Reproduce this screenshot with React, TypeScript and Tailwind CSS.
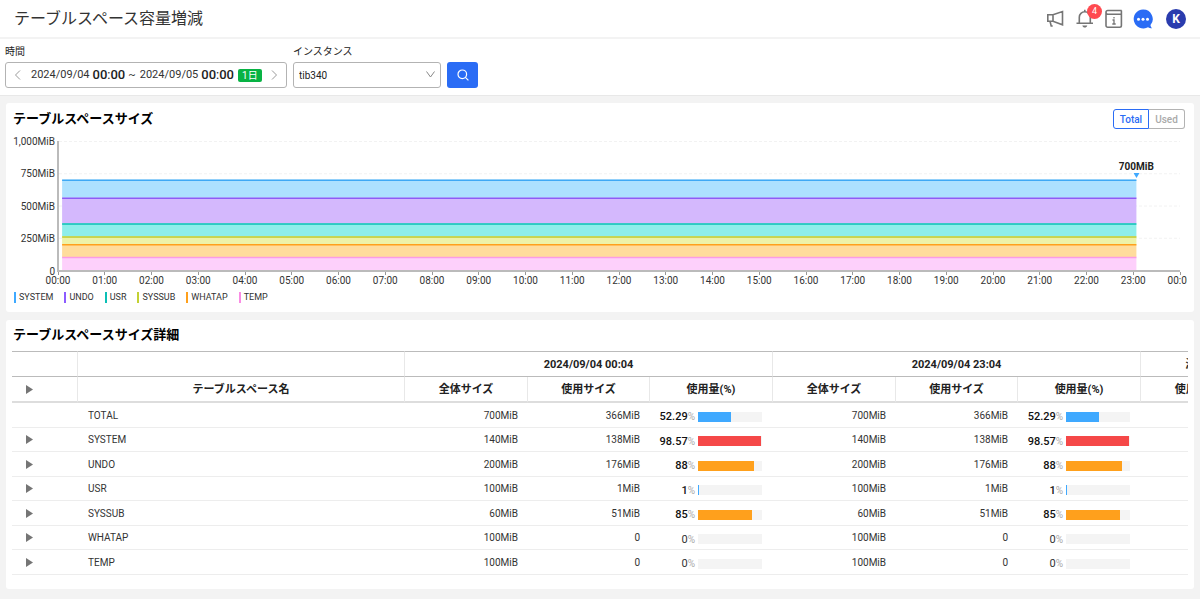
import React from "react";

type Row = { name: string; total: string; used: string; pct: string; color: string; expandable: boolean };

const rows: Row[] = [
  { name: "TOTAL", total: "700MiB", used: "366MiB", pct: "52.29", color: "bg-[#3fa9ff]", expandable: false },
  { name: "SYSTEM", total: "140MiB", used: "138MiB", pct: "98.57", color: "bg-[#f54848]", expandable: true },
  { name: "UNDO", total: "200MiB", used: "176MiB", pct: "88", color: "bg-[#ffa01c]", expandable: true },
  { name: "USR", total: "100MiB", used: "1MiB", pct: "1", color: "bg-[#3fa9ff]", expandable: true },
  { name: "SYSSUB", total: "60MiB", used: "51MiB", pct: "85", color: "bg-[#ffa01c]", expandable: true },
  { name: "WHATAP", total: "100MiB", used: "0", pct: "0", color: "bg-[#3fa9ff]", expandable: true },
  { name: "TEMP", total: "100MiB", used: "0", pct: "0", color: "bg-[#3fa9ff]", expandable: true },
];

const series = [
  { name: "SYSTEM", value: 140, line: "#3fa9f5", fill: "#ade1ff", swatch: "bg-[#3fa9ff]" },
  { name: "UNDO", value: 200, line: "#8c5cf5", fill: "#d4b8fd", swatch: "bg-[#8c5cff]" },
  { name: "USR", value: 100, line: "#0bbfb5", fill: "#8eeeea", swatch: "bg-[#0bbfb5]" },
  { name: "SYSSUB", value: 60, line: "#bccb30", fill: "#eef2a8", swatch: "bg-[#c3d133]" },
  { name: "WHATAP", value: 100, line: "#ffa01c", fill: "#ffdc9c", swatch: "bg-[#ffa01c]" },
  { name: "TEMP", value: 100, line: "#fa9be6", fill: "#fdd0fb", swatch: "bg-[#fa8ce4]" },
];

const times = Array.from({ length: 25 }, (_, i) => String(i % 24).padStart(2, "0") + ":00");

function Arrow() {
  return (
    <svg className="block h-[9px] w-[7px]" viewBox="0 0 7 9" fill="#757575" aria-hidden="true">
      <path d="M0 0 7 4.5 0 9Z" />
    </svg>
  );
}

function TopBar() {
  return (
    <header className="flex h-[39px] items-center justify-between border-b-2 border-[#f3f3f3] bg-white px-3.5">
      <h1 className="text-base text-[#333]">テーブルスペース容量増減</h1>
      <div className="flex items-center gap-[9px]">
        <button aria-label="お知らせ" className="h-5 w-5">
          <svg viewBox="0 0 20 20" className="h-5 w-5" fill="none" stroke="#757575" strokeWidth="1.6">
            <path d="M1.800 5.700h5.200L16.500 2.500v13.300L7 12.300H1.800ZM7 5.700v6.600M4 12.300l1.200 4.700h1.500" />
          </svg>
        </button>
        <button aria-label="通知" className="relative h-5 w-5">
          <svg viewBox="0 0 20 20" className="h-5 w-5" fill="none" stroke="#757575" strokeWidth="1.600">
            <path d="M1.500 14.300h16.500M4.300 14.300V8.300a5.500 5.500 0 0 1 11 0v6M9.800 2.800V.8" />
            <path d="M7.300 16.500h5c-.5 1.500-1.300 2-2.500 2s-2-.5-2.500-2Z" fill="#757575" stroke="none" />
          </svg>
          <span className="absolute -top-[5px] left-3 h-[15px] w-[15px] rounded-full bg-[#ff4a50] text-center text-[9px] leading-[15px] text-white">4</span>
        </button>
        <button aria-label="ガイド" className="h-5 w-5">
          <svg viewBox="0 0 20 20" className="h-5 w-5" fill="none" stroke="#757575" strokeWidth="1.600">
            <path d="M17.200 5.300H4a2 2 0 0 1-2-2A1.700 1.700 0 0 1 3.700 1.500h14M2 3.500v13a1.700 1.700 0 0 0 1.700 1.700h12a1.700 1.700 0 0 0 1.700-1.700V1.500" />
            <path d="M10 8v1.500M8.500 11H10v4M8.300 15h3.400" strokeWidth="1.300" />
          </svg>
        </button>
        <button aria-label="チャット" className="h-5 w-5">
          <svg viewBox="0 0 20 20" className="h-5 w-5">
            <path d="M10 .5a9.500 9.500 0 1 0 5 17.700c1.200.9 2.800 1.300 4 1-.9-.7-1.400-1.900-1.500-3.100A9.500 9.500 0 0 0 10 .5Z" fill="#2a6cf5" />
            <g fill="#fff"><circle cx="5.500" cy="10.200" r="1.500" /><circle cx="10" cy="10.200" r="1.500" /><circle cx="14.500" cy="10.200" r="1.500" /></g>
          </svg>
        </button>
        <button aria-label="アカウント" className="ml-1 h-5 w-5 rounded-full bg-[#2a3cae] text-xs leading-5 font-bold text-white">K</button>
      </div>
    </header>
  );
}

function Filters() {
  return (
    <form className="flex items-end gap-1.5 border-b border-[#e8e8e8] bg-white px-[5px] pt-1.5 pb-[7px]">
      <div>
        <div className="mb-[3px] text-[10px] leading-[14px] text-[#222]">時間</div>
        <div className="flex h-[26px] w-[282px] items-center rounded-[3px] border border-[#b3b3b3] px-2">
          <button type="button" aria-label="前へ" className="w-[17px]">
            <svg viewBox="0 0 8 10" className="h-2.5 w-2" fill="none" stroke="#999"><path d="M6 .5 1.500 5 6 9.500" /></svg>
          </button>
          <div className="flex flex-1 items-center text-[11px] whitespace-nowrap text-[#333]">
            <span>2024/09/04</span>
            <b className="ml-[3px] text-[13px] leading-4 font-medium text-[#222]">00<span className="font-normal">:</span>00</b>
            <span className="mr-1 ml-[3px]">~</span>
            <span>2024/09/05</span>
            <b className="ml-[3px] text-[13px] leading-4 font-medium text-[#222]">00<span className="font-normal">:</span>00</b>
            <span className="ml-1 h-[13px] rounded-[2px] bg-[#08b344] px-1 text-[10px] leading-[13px] text-white">1日</span>
          </div>
          <button type="button" aria-label="次へ" className="w-2">
            <svg viewBox="0 0 8 10" className="h-2.5 w-2" fill="none" stroke="#999"><path d="M2 .5 6.500 5 2 9.500" /></svg>
          </button>
        </div>
      </div>
      <div>
        <label htmlFor="instance" className="mb-[3px] block text-[10px] leading-[14px] text-[#222]">インスタンス</label>
        <div className="relative">
          <select id="instance" className="block h-[26px] w-[148px] appearance-none rounded-[3px] border border-[#b3b3b3] bg-white px-[5px] text-[10px] text-[#222]">
            <option>tib340</option>
          </select>
          <svg viewBox="0 0 9 7" className="pointer-events-none absolute top-[9px] right-1.5 h-[7px] w-[9px]" fill="none" stroke="#888"><path d="M.5.5l4 5.500 4-5.500" /></svg>
        </div>
      </div>
      <button type="button" aria-label="検索" className="flex h-[26px] w-[31px] items-center justify-center rounded-[3px] bg-[#2a6cf5]">
        <svg viewBox="0 0 12 12" className="h-3 w-3" fill="none" stroke="#fff" strokeWidth="1.200"><circle cx="5.300" cy="5.300" r="4.300" /><path d="m8.400 8.400 3 3" /></svg>
      </button>
    </form>
  );
}

function Chart() {
  let top = 1000 - 700;
  const bands = series.map((s) => {
    const y = top;
    top += s.value;
    return { ...s, y };
  });
  return (
    <div className="px-[7px]">
      <div className="flex">
        <div className="flex h-[130px] w-11 flex-col justify-between pr-0.5 text-right text-[10px] text-[#333]">
          {["1,000MiB", "750MiB", "500MiB", "250MiB", "0"].map((t) => (
            <span key={t} className="flex h-0 items-center justify-end">{t}</span>
          ))}
        </div>
        <div className="relative mr-[7px] h-[131px] min-w-0 flex-1 border-b-2 border-l-2 border-[#bbb]">
          <svg className="block h-full w-full" viewBox="0 0 1440 1000" preserveAspectRatio="none">
            {[0, 250, 500, 750].map((y) => (
              <path key={y} d={`M0 ${y + 4}H1440`} stroke="#f2f2f2" strokeDasharray="3 2" vectorEffect="non-scaling-stroke" />
            ))}
            {bands.map((b) => (
              <rect key={b.name} x="4" y={b.y} width="1380" height={b.value} fill={b.fill} />
            ))}
            {bands.map((b) => (
              <path key={b.name} d={`M4 ${b.y + 4}H1384`} stroke={b.line} strokeWidth="1.500" vectorEffect="non-scaling-stroke" />
            ))}
          </svg>
          <div className="absolute top-[19px] left-[96.1%] flex -translate-x-1/2 flex-col items-center text-[10px] leading-[13px] font-bold text-[#222]">
            700MiB
            <svg viewBox="0 0 6 5" className="h-[5px] w-1.5" fill="#3fa9ff"><path d="M0 0H6L3 5Z" /></svg>
          </div>
        </div>
      </div>
      <div className="overflow-hidden pl-[45px]">
        <div className="mr-[7px] flex justify-between">
          {times.map((t, i) => (
            <div key={i} className="flex h-4 w-0 flex-col items-center text-[10px] leading-3 text-[#333]">
              <span className="h-[3px] w-px shrink-0 bg-[#999]" />
              {t}
            </div>
          ))}
        </div>
      </div>
      <ul className="mt-[3px] flex gap-[11px] pl-px text-[9px] leading-3 text-[#333]">
        {series.map((s) => (
          <li key={s.name} className="flex items-center gap-[3px]">
            <span className={"h-[11px] w-0.5 " + s.swatch} />
            {s.name}
          </li>
        ))}
      </ul>
    </div>
  );
}

function Usage({ row }: { row: Row }) {
  return (
    <div className="flex items-center pt-[3px]">
      <span className="flex w-[46px] items-center justify-end leading-[15px]">
        <b className={row.pct === "0" ? "text-[11px] font-normal" : "text-[11px] font-medium text-[#111]"}>{row.pct}</b>
        <span className="text-[#aaa]">%</span>
      </span>
      <span className="ml-[3px] block h-2.5 w-16 bg-[#f4f4f4]">
        <span className={"block h-full " + row.color} style={{ width: `${row.pct}%` }} />
      </span>
    </div>
  );
}

function Details() {
  const group = "border-l border-[#e8e8e8]";
  return (
    <div className="mx-1.5 overflow-hidden">
      <table className="w-[1374px] table-fixed border-separate border-spacing-0 text-[10px] text-[#333]">
        <colgroup>
          <col className="w-[65px]" />
          <col className="w-[327px]" />
          <col className="w-[123px]" />
          <col className="w-[122px]" />
          <col className="w-[123px]" />
          <col className="w-[123px]" />
          <col className="w-[122px]" />
          <col className="w-[123px]" />
          <col className="w-[123px]" />
          <col className="w-[123px]" />
        </colgroup>
        <thead className="text-[11px] leading-[15px] text-[#222] [&_th]:p-0 [&_th]:font-bold">
          <tr className="h-[26px] [&>th]:border-t [&>th]:border-b [&>th]:border-y-[#bbb]">
            <th />
            <th className={group} />
            <th colSpan={3} className={group}>2024/09/04 00:04</th>
            <th colSpan={3} className={group}>2024/09/04 23:04</th>
            <th className={group}>減少量</th>
            <th className={group} />
          </tr>
          <tr className="h-[26px] [&>th]:border-b-2 [&>th]:border-b-[#ddd]">
            <th><button aria-label="すべて展開" className="block pl-3.5"><Arrow /></button></th>
            <th className={group}>テーブルスペース名</th>
            {["全体サイズ", "使用サイズ", "使用量(%)", "全体サイズ", "使用サイズ", "使用量(%)", "使用サイズ", ""].map((h, i) => (
              <th key={i} className={group}>{h}</th>
            ))}
          </tr>
        </thead>
        <tbody className="[&_td]:border-b [&_td]:border-[#ededed] [&_td]:p-0">
          {rows.map((r) => (
            <tr key={r.name} className="odd:h-[25px] even:h-6">
              <td>{r.expandable && <button aria-label={r.name + "を展開"} className="block pl-3.5"><Arrow /></button>}</td>
              <td><span className="pl-[11px]">{r.name}</span></td>
              {[0, 1].map((g) => (
                <React.Fragment key={g}>
                  <td className="text-right"><span className="pr-[9px]">{r.total}</span></td>
                  <td className="text-right"><span className="pr-[9px]">{r.used}</span></td>
                  <td><Usage row={r} /></td>
                </React.Fragment>
              ))}
              <td /><td />
            </tr>
          ))}
        </tbody>
      </table>
    </div>
  );
}

export default function App() {
  return (
    <div className="min-h-screen overflow-hidden bg-[#f3f3f3] font-[Roboto,'Noto_Sans_CJK_JP',sans-serif]" lang="ja">
      <TopBar />
      <Filters />
      <main className="flex flex-col gap-2 px-1.5 pt-[7px] pb-2.5">
        <section className="rounded-[3px] bg-white pb-[9px]">
          <div className="flex h-[38px] items-start justify-between px-[7px] pt-1.5">
            <h2 className="pt-px text-[13px] leading-[18px] font-bold text-black">テーブルスペースサイズ</h2>
            <div className="mr-0.5 flex text-[10px] font-medium">
              <button className="h-5 w-9 rounded-l-[3px] border border-[#2a6cf5] text-[#2a6cf5]">Total</button>
              <button className="h-5 w-9 rounded-r-[3px] border border-l-0 border-[#b3b3b3] text-[#aaa]">Used</button>
            </div>
          </div>
          <Chart />
        </section>
        <section className="rounded-[3px] bg-white pb-3.5">
          <h2 className="h-[31px] px-[7px] pt-1.5 text-[13px] leading-[18px] font-bold text-black">テーブルスペースサイズ詳細</h2>
          <Details />
        </section>
      </main>
    </div>
  );
}
